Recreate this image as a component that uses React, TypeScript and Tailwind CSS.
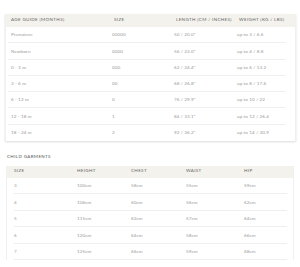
import React from "react";

// Size guide tables - baby and child sizes
const babyRows = [
  ["Premature", "00000", "50 / 20.0\"", "up to 3 / 6.6"],
  ["Newborn", "0000", "56 / 22.0\"", "up to 4 / 8.8"],
  ["0 - 3 m", "000", "62 / 24.4\"", "up to 6 / 13.2"],
  ["3 - 6 m", "00", "68 / 26.8\"", "up to 8 / 17.6"],
  ["6 - 12 m", "0", "76 / 29.9\"", "up to 10 / 22"],
  ["12 - 18 m", "1", "84 / 33.1\"", "up to 12 / 26.4"],
  ["18 - 24 m", "2", "92 / 36.2\"", "up to 14 / 30.9"],
];

const childRows = [
  ["3", "100cm", "58cm", "55cm", "59cm"],
  ["4", "106cm", "60cm", "56cm", "62cm"],
  ["5", "115cm", "62cm", "57cm", "64cm"],
  ["6", "120cm", "64cm", "58cm", "66cm"],
  ["7", "125cm", "66cm", "59cm", "68cm"],
];

const font = { fontFamily: "Lato, 'Noto Sans', sans-serif" };

export default function App() {
  return (
    <div className="w-[300px] h-[267px] bg-white overflow-hidden text-[#9a9a9a]" style={font}>
      {/* Tableau bébé */}
      <div className="ml-[5px] mr-[4px] mt-[14px] shadow-[0_1px_2px_rgba(0,0,0,0.14)] border-l border-r border-[#f0f0f0]">
        <div className="grid grid-cols-[103px_62px_63px_1fr] h-[13px] items-center bg-[#f4f2ed] text-[4.5px] tracking-[0.35px] uppercase text-[#666] pl-[5px]">
          <div>Age Guide (Months)</div>
          <div>Size</div>
          <div>Length (cm / inches)</div>
          <div>Weight (kg / lbs)</div>
        </div>
        <div className="pl-[2px] pr-[9px]">
          {babyRows.map((r, i) => (
            <div
              key={i}
              className={
                "grid grid-cols-[101px_62px_63px_1fr] h-[16.3px] items-center text-[4.6px] tracking-[0.1px] pl-[3px] " +
                (i < babyRows.length - 1 ? "border-b border-[#efefef]" : "")
              }
            >
              {r.map((c, j) => (
                <div key={j}>{c}</div>
              ))}
            </div>
          ))}
        </div>
      </div>

      <div className="ml-[7px] mt-[13px] text-[4.5px] tracking-[0.35px] uppercase text-[#555]">Child Garments</div>

      {/* Tableau enfant */}
      <div className="ml-[6px] mr-[6px] mt-[5px] border-l border-r border-[#f0f0f0]">
        <div className="grid grid-cols-[63px_54px_55px_58px_1fr] h-[12px] items-center bg-[#f4f2ed] text-[4.5px] tracking-[0.35px] uppercase text-[#666] pl-[7px]">
          <div>Size</div>
          <div>Height</div>
          <div>Chest</div>
          <div>Waist</div>
          <div>Hip</div>
        </div>
        <div className="pl-[7px] pr-[6px]">
          {childRows.map((r, i) => (
            <div
              key={i}
              className="grid grid-cols-[63px_54px_55px_58px_1fr] h-[16.5px] items-center text-[4.6px] tracking-[0.1px] border-b border-[#efefef]"
            >
              {r.map((c, j) => (
                <div key={j}>{c}</div>
              ))}
            </div>
          ))}
        </div>
      </div>
    </div>
  );
}
